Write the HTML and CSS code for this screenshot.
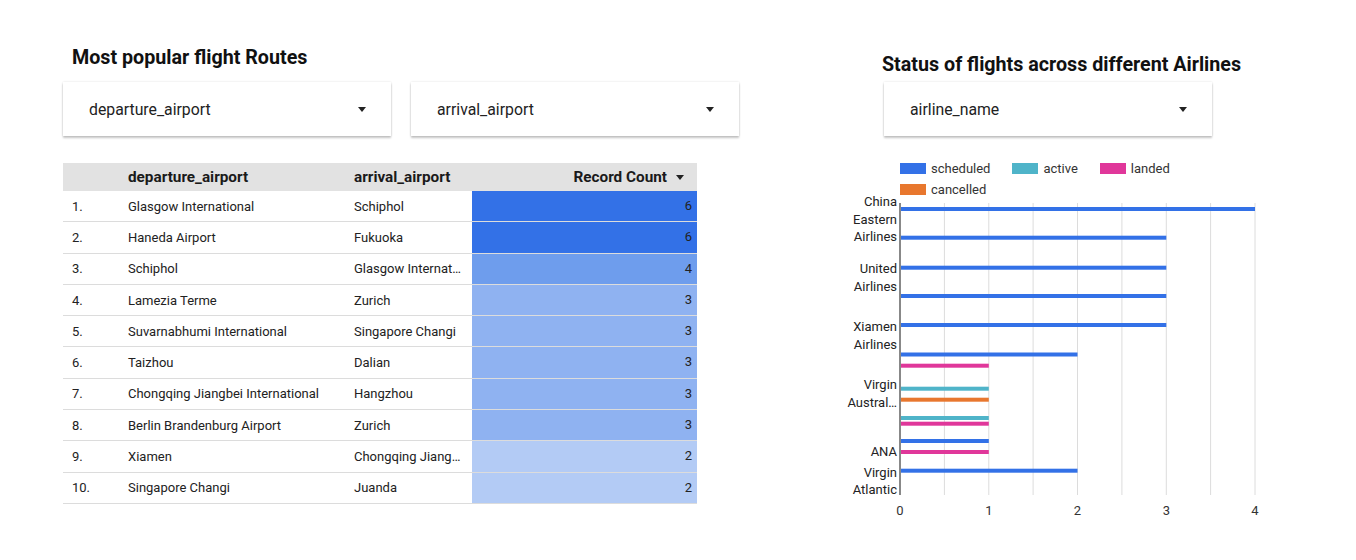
FILE: index.html
```html
<!DOCTYPE html>
<html>
<head>
<meta charset="utf-8">
<link rel="stylesheet" href="styles.css">
</head>
<body>
<div class="dash">
  <section class="left">
    <h2 class="title title-left">Most popular flight Routes</h2>
    <div class="filters">
      <div class="dropdown"><span>departure_airport</span><svg class="caret" width="8" height="5" viewBox="0 0 8 5"><path d="M0 0H8L4 5Z"/></svg></div>
      <div class="dropdown"><span>arrival_airport</span><svg class="caret" width="8" height="5" viewBox="0 0 8 5"><path d="M0 0H8L4 5Z"/></svg></div>
    </div>
    <table class="routes">
      <thead>
        <tr>
          <th class="c-num"></th>
          <th class="c-dep">departure_airport</th>
          <th class="c-arr">arrival_airport</th>
          <th class="c-cnt">Record Count<svg class="sort" width="8" height="5" viewBox="0 0 8 5"><path d="M0 0H8L4 5Z"/></svg></th>
        </tr>
      </thead>
      <tbody>
        <tr><td class="c-num">1.</td><td class="c-dep">Glasgow International</td><td class="c-arr">Schiphol</td><td class="c-cnt"><div class="bar b6">6</div></td></tr>
        <tr><td class="c-num">2.</td><td class="c-dep">Haneda Airport</td><td class="c-arr">Fukuoka</td><td class="c-cnt"><div class="bar b6">6</div></td></tr>
        <tr><td class="c-num">3.</td><td class="c-dep">Schiphol</td><td class="c-arr">Glasgow Internat…</td><td class="c-cnt"><div class="bar b4">4</div></td></tr>
        <tr><td class="c-num">4.</td><td class="c-dep">Lamezia Terme</td><td class="c-arr">Zurich</td><td class="c-cnt"><div class="bar b3">3</div></td></tr>
        <tr><td class="c-num">5.</td><td class="c-dep">Suvarnabhumi International</td><td class="c-arr">Singapore Changi</td><td class="c-cnt"><div class="bar b3">3</div></td></tr>
        <tr><td class="c-num">6.</td><td class="c-dep">Taizhou</td><td class="c-arr">Dalian</td><td class="c-cnt"><div class="bar b3">3</div></td></tr>
        <tr><td class="c-num">7.</td><td class="c-dep">Chongqing Jiangbei International</td><td class="c-arr">Hangzhou</td><td class="c-cnt"><div class="bar b3">3</div></td></tr>
        <tr><td class="c-num">8.</td><td class="c-dep">Berlin Brandenburg Airport</td><td class="c-arr">Zurich</td><td class="c-cnt"><div class="bar b3">3</div></td></tr>
        <tr><td class="c-num">9.</td><td class="c-dep">Xiamen</td><td class="c-arr">Chongqing Jiang…</td><td class="c-cnt"><div class="bar b2">2</div></td></tr>
        <tr><td class="c-num">10.</td><td class="c-dep">Singapore Changi</td><td class="c-arr">Juanda</td><td class="c-cnt"><div class="bar b2">2</div></td></tr>
      </tbody>
    </table>
  </section>

  <section class="right">
    <h2 class="title title-right">Status of flights across different Airlines</h2>
    <div class="dropdown dropdown-right"><span>airline_name</span><svg class="caret" width="8" height="5" viewBox="0 0 8 5"><path d="M0 0H8L4 5Z"/></svg></div>
    <div class="legend">
      <div class="item"><span class="sw sw-sched"></span>scheduled</div>
      <div class="item"><span class="sw sw-active"></span>active</div>
      <div class="item"><span class="sw sw-landed"></span>landed</div>
      <div class="item"><span class="sw sw-cancel"></span>cancelled</div>
    </div>
    <svg class="chart" width="430" height="345" viewBox="0 0 430 345">
      <g class="grid">
        <line x1="104.4" y1="18" x2="104.4" y2="310"/>
        <line x1="148.8" y1="18" x2="148.8" y2="310"/>
        <line x1="193.1" y1="18" x2="193.1" y2="310"/>
        <line x1="237.5" y1="18" x2="237.5" y2="310"/>
        <line x1="281.9" y1="18" x2="281.9" y2="310"/>
        <line x1="326.3" y1="18" x2="326.3" y2="310"/>
        <line x1="370.6" y1="18" x2="370.6" y2="310"/>
        <line x1="415" y1="18" x2="415" y2="310"/>
      </g>
      <g>
        <rect class="s" x="60" y="22" width="355" height="4"/>
        <rect class="s" x="60" y="50.7" width="266.3" height="4"/>
        <rect class="s" x="60" y="80.7" width="266.3" height="4"/>
        <rect class="s" x="60" y="109" width="266.3" height="4"/>
        <rect class="s" x="60" y="138" width="266.3" height="4"/>
        <rect class="s" x="60" y="167.5" width="177.5" height="4"/>
        <rect class="l" x="60" y="178.7" width="88.8" height="4"/>
        <rect class="a" x="60" y="201.7" width="88.8" height="4"/>
        <rect class="c" x="60" y="212.7" width="88.8" height="4"/>
        <rect class="a" x="60" y="231" width="88.8" height="4"/>
        <rect class="l" x="60" y="236.7" width="88.8" height="4"/>
        <rect class="s" x="60" y="254" width="88.8" height="4"/>
        <rect class="l" x="60" y="265" width="88.8" height="4"/>
        <rect class="s" x="60" y="283.7" width="177.5" height="4"/>
      </g>
      <line class="axis" x1="60" y1="18" x2="60" y2="310"/>
      <g class="ylab">
        <text x="57" y="21.4">China</text>
        <text x="57" y="39">Eastern</text>
        <text x="57" y="55.7">Airlines</text>
        <text x="57" y="88">United</text>
        <text x="57" y="105.7">Airlines</text>
        <text x="57" y="146.4">Xiamen</text>
        <text x="57" y="163.7">Airlines</text>
        <text x="57" y="204">Virgin</text>
        <text x="57" y="222">Austral…</text>
        <text x="57" y="271.4">ANA</text>
        <text x="57" y="292">Virgin</text>
        <text x="57" y="309">Atlantic</text>
      </g>
      <g class="xlab">
        <text x="60" y="329.7">0</text>
        <text x="148.8" y="329.7">1</text>
        <text x="237.5" y="329.7">2</text>
        <text x="326.3" y="329.7">3</text>
        <text x="415" y="329.7">4</text>
      </g>
    </svg>
  </section>
</div>
</body>
</html>
```

FILE: styles.css
```css
html, body {
  margin: 0;
  padding: 0;
  background: #ffffff;
}
body {
  font-family: Roboto, "Liberation Sans", Arial, sans-serif;
  color: #222222;
  width: 1356px;
  height: 560px;
  overflow: hidden;
}
.dash {
  display: flex;
  padding-left: 63px;
}
.left {
  width: 634px;
  flex-shrink: 0;
  padding-top: 46px;
}
.right {
  margin-left: 143px;
  width: 440px;
  flex-shrink: 0;
  padding-top: 53px;
  display: flex;
  flex-direction: column;
}
.title {
  margin: 0;
  font-size: 19.7px;
  line-height: 24px;
  font-weight: 700;
  color: #111111;
  white-space: nowrap;
}
.title-left {
  margin-left: 9px;
}
.title-right {
  margin-left: 42px;
}
.filters {
  display: flex;
  gap: 20px;
  margin-top: 12px;
}
.dropdown {
  width: 328px;
  height: 54px;
  flex-shrink: 0;
  box-sizing: border-box;
  background: #ffffff;
  box-shadow: 0 2px 2px rgba(0, 0, 0, 0.22), 0 0 2px rgba(0, 0, 0, 0.12);
  display: flex;
  align-items: center;
  justify-content: space-between;
  padding: 0 25px 0 26px;
  font-size: 15.8px;
  color: #222222;
}
.dropdown-right {
  margin-left: 44px;
  margin-top: 5px;
}
.caret path, .sort path {
  fill: #222222;
}
.routes {
  margin-top: 27px;
  width: 634px;
  border-collapse: collapse;
  table-layout: fixed;
  font-size: 13px;
  color: #222222;
}
.routes th {
  background: #e2e2e2;
  height: 28px;
  padding: 0 0 0 9px;
  font-size: 15.3px;
  font-weight: 700;
  text-align: left;
  color: #1a1a1a;
}
.routes td {
  height: 30.3px;
  padding: 0 0 0 9px;
  border-bottom: 1px solid #dcdcdc;
  white-space: nowrap;
  overflow: hidden;
}
.routes .c-num { width: 47px; }
.routes .c-dep { width: 217px; }
.routes .c-arr { width: 116px; }
.routes th.c-cnt {
  text-align: right;
  padding-right: 13px;
}
.sort {
  margin-left: 9px;
  vertical-align: 2px;
}
.routes td.c-cnt {
  padding: 0 0 0 2px;
  height: 30.3px;
}
.bar {
  height: 30.3px;
  line-height: 30.3px;
  text-align: right;
  padding-right: 5px;
}
.b6 { background: #3371e7; }
.b4 { background: #6e9ded; }
.b3 { background: #8fb2f1; }
.b2 { background: #b3cbf5; }

.legend {
  margin-left: 60px;
  margin-top: 22px;
  width: 300px;
  display: flex;
  flex-wrap: wrap;
  font-size: 13px;
  line-height: 21px;
  color: #333333;
}
.item {
  display: flex;
  align-items: center;
  margin-right: 22px;
}
.sw {
  width: 26px;
  height: 11px;
  margin-right: 5px;
}
.sw-sched { background: #3371e7; }
.sw-active { background: #4fb4c9; }
.sw-landed { background: #e0379a; }
.sw-cancel { background: #e8772e; }
.chart {
  display: block;
  margin-top: -15px;
  overflow: visible;
}
.grid line {
  stroke: #dcdcdc;
  stroke-width: 1;
}
.axis {
  stroke: #888888;
  stroke-width: 2;
}
.chart .s { fill: #3371e7; }
.chart .a { fill: #4fb4c9; }
.chart .l { fill: #e0379a; }
.chart .c { fill: #e8772e; }
.ylab text {
  font-size: 13px;
  text-anchor: end;
  fill: #222222;
  font-family: Roboto, "Liberation Sans", Arial, sans-serif;
}
.xlab text {
  font-size: 13px;
  text-anchor: middle;
  fill: #333333;
  font-family: Roboto, "Liberation Sans", Arial, sans-serif;
}
```
